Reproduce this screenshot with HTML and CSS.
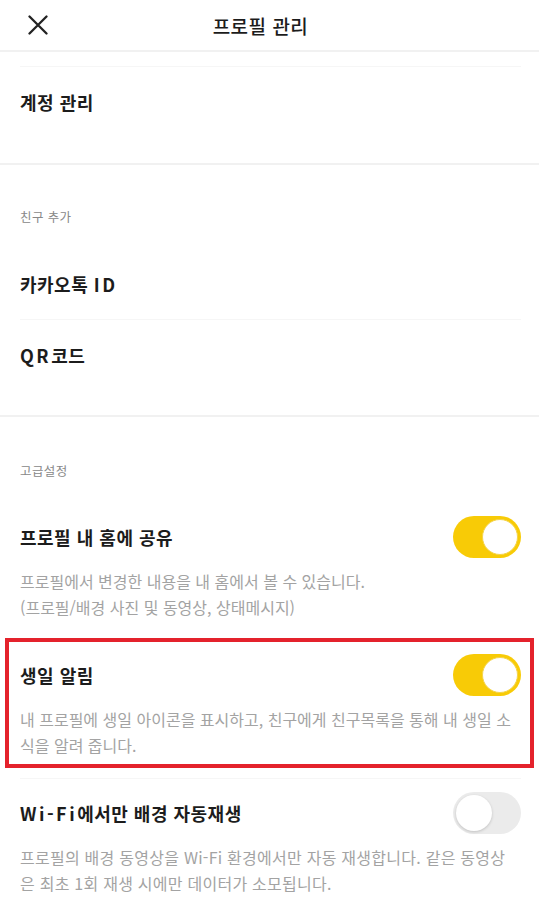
FILE: index.html
```html
<!DOCTYPE html>
<html lang="ko">
<head>
    <meta charset="UTF-8">
    <meta name="viewport" content="width=device-width, initial-scale=1.0">
    <title>프로필 관리</title>
    <link rel="stylesheet" href="styles.css">
</head>
<body>
    <header class="topbar">
        <button class="close" aria-label="닫기">
            <svg width="20" height="20" viewBox="0 0 20 20">
                <path d="M1.5 1.5 L18.5 18.5 M18.5 1.5 L1.5 18.5" stroke="#222" stroke-width="2.3" stroke-linecap="round" fill="none"/>
            </svg>
        </button>
        <h1>프로필 관리</h1>
        <span></span>
    </header>

    <!-- 계정 -->
    <section class="group account">
        <div class="row"><span>계정 관리</span></div>
    </section>

    <!-- 친구 추가 -->
    <section class="group friends">
        <p class="label">친구 추가</p>
        <div class="row"><span>카카오톡 <span class="latin">ID</span></span></div>
        <div class="row"><span><span class="latin">QR</span>코드</span></div>
    </section>

    <!-- 고급설정 -->
    <section class="group advanced">
        <p class="label">고급설정</p>

        <div class="item">
            <div class="item-head">
                <span class="item-title">프로필 내 홈에 공유</span>
                <span class="switch on"><span class="knob"></span></span>
            </div>
            <p class="desc">프로필에서 변경한 내용을 내 홈에서 볼 수 있습니다.<br>(프로필/배경 사진 및 동영상, 상태메시지)</p>
        </div>

        <div class="item highlight">
            <div class="item-head">
                <span class="item-title">생일 알림</span>
                <span class="switch on"><span class="knob"></span></span>
            </div>
            <p class="desc">내 프로필에 생일 아이콘을 표시하고, 친구에게 친구목록을 통해 내 생일 소식을 알려 줍니다.</p>
        </div>

        <div class="item">
            <div class="item-head">
                <span class="item-title"><span class="latin">Wi-Fi</span>에서만 배경 자동재생</span>
                <span class="switch"><span class="knob"></span></span>
            </div>
            <p class="desc wide">프로필의 배경 동영상을 Wi-Fi 환경에서만 자동 재생합니다. 같은 동영상은 최초 1회 재생 시에만 데이터가 소모됩니다.</p>
        </div>
    </section>
</body>
</html>
```

FILE: styles.css
```css
body {
    font-family: "Noto Sans CJK KR", "Noto Sans", sans-serif;
    background: #fff;
    color: #1c1c1c;
    margin: 0;
}

/* 상단바 */
.topbar {
    height: 50px;
    display: grid;
    grid-template-columns: 56px 1fr 74px;
    align-items: center;
    border-bottom: 2px solid #f1f1f1;
}

.close {
    border: none;
    background: none;
    padding: 0;
    margin-left: 28px;
    width: 20px;
    height: 20px;
    display: flex;
    cursor: pointer;
}

.topbar h1 {
    margin: 0;
    text-align: center;
    font-size: 19px;
    font-weight: 500;
    letter-spacing: 0.5px;
}

/* 그룹 */
.group {
    border-bottom: 2px solid #f1f1f1;
}

.account {
    padding: 14px 0 26px;
}

.friends {
    padding: 42px 0 25px;
}

.advanced {
    padding: 44px 0 0;
    border-bottom: none;
}

.label {
    margin: 0 20px 22px;
    font-size: 12.5px;
    line-height: 20px;
    letter-spacing: 0.4px;
    color: #888;
}

.row {
    margin: 0 18px 0 20px;
    height: 70px;
    display: flex;
    align-items: center;
    font-size: 18px;
    font-weight: 700;
    letter-spacing: 0.5px;
    border-top: 1px solid #f6f6f6;
}

.friends .row:first-of-type {
    border-top: none;
}

.latin {
    letter-spacing: 2.5px;
}

/* 설정 항목 */
.item {
    position: relative;
    margin: 0 18px 0 20px;
    padding: 13px 0 20px;
    border-top: 1px solid #f6f6f6;
}

.item:first-of-type {
    border-top: none;
}

.item-head {
    height: 42px;
    display: flex;
    align-items: center;
    justify-content: space-between;
}

.item-title {
    font-size: 18px;
    font-weight: 700;
    letter-spacing: 0.5px;
}

.desc {
    margin: 10px 0 0;
    padding-right: 8px;
    font-size: 16px;
    line-height: 26px;
    color: #a3a3a3;
}

.desc.wide {
    letter-spacing: 0.25px;
}

/* 스위치 */
.switch {
    width: 68px;
    height: 42px;
    border-radius: 21px;
    background: #ebebeb;
    display: flex;
    align-items: center;
    padding: 0 3px;
    box-sizing: border-box;
    flex-shrink: 0;
}

.switch .knob {
    width: 36px;
    height: 36px;
    border-radius: 50%;
    background: #fff;
    box-shadow: 0 1px 3px rgba(0, 0, 0, 0.18);
}

.switch.on {
    background: #f8cb06;
    justify-content: flex-end;
}

.switch.on .knob {
    box-shadow: none;
    border: 1px solid #f4d44a;
    box-sizing: border-box;
}

/* 강조 표시 */
.highlight::after {
    content: "";
    position: absolute;
    top: -3px;
    bottom: 10px;
    left: -15px;
    right: -13px;
    border: 4px solid #e4222c;
    pointer-events: none;
}
```
